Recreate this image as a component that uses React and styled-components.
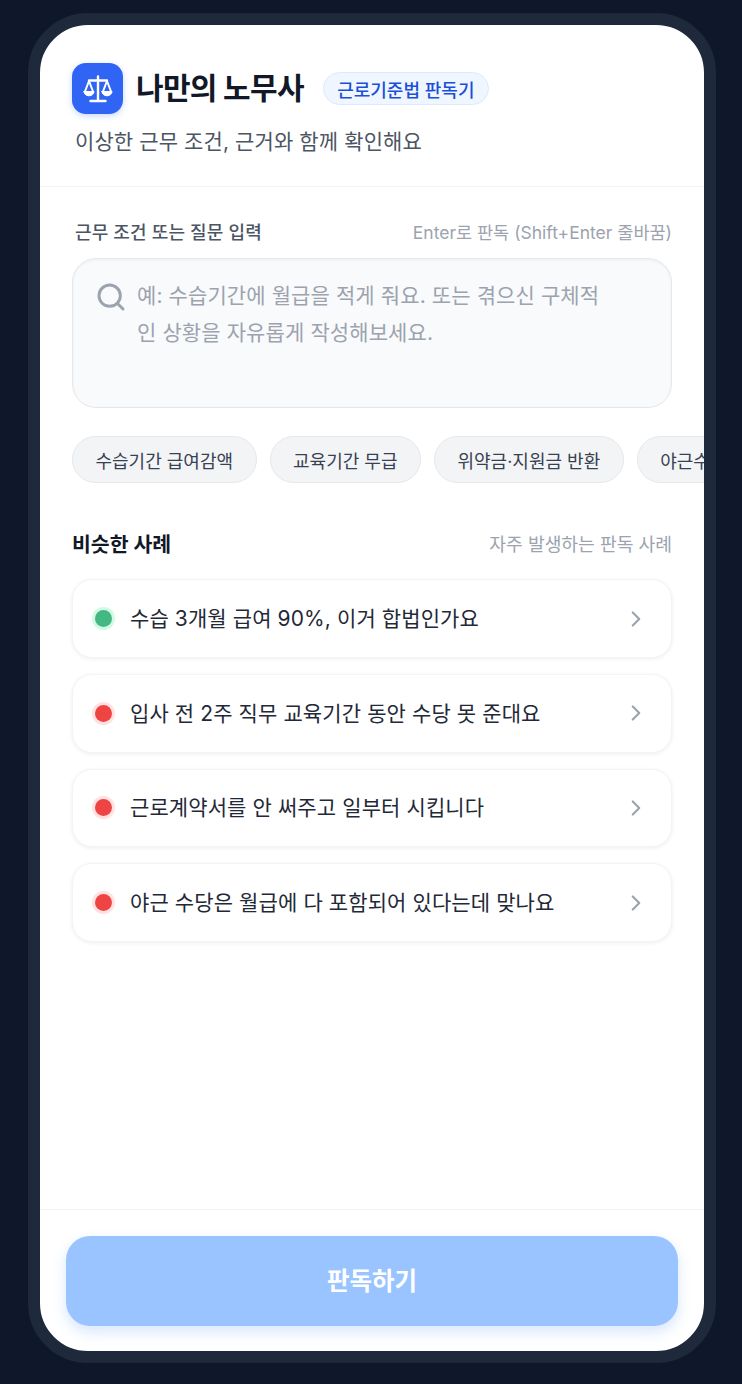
import styled, { createGlobalStyle } from 'styled-components';
import { Search, ChevronRight } from 'lucide-react';

const GlobalStyle = createGlobalStyle`
  html, body {
    margin: 0;
    padding: 0;
    background: #0f172a;
  }
  * {
    box-sizing: border-box;
  }
  body {
    font-family: 'Inter', 'Noto Sans CJK KR', sans-serif;
  }
`;

const Page = styled.div`
  width: 742px;
  height: 1384px;
  padding: 13px 26px 21px 28px;
  background: #0f172a;
  overflow: hidden;
`;

const Phone = styled.div`
  width: 688px;
  height: 1350px;
  border: 12px solid #1e293b;
  border-radius: 60px;
  background: #fff;
  overflow: hidden;
  display: flex;
  flex-direction: column;
`;

const Header = styled.header`
  height: 162px;
  padding: 38px 32px 0;
  border-bottom: 1px solid #f3f4f6;
  flex-shrink: 0;
`;

const Brand = styled.div`
  display: flex;
  align-items: center;
`;

const Logo = styled.div`
  width: 51px;
  height: 51px;
  border-radius: 14px;
  background: #2f64f5;
  color: #fff;
  display: flex;
  align-items: center;
  justify-content: center;
  box-shadow: 0 2px 6px rgba(37, 99, 235, 0.25);
`;

const Title = styled.h1`
  margin: 0 0 0 13px;
  font-size: 30px;
  line-height: 51px;
  font-weight: 700;
  letter-spacing: -0.7px;
  color: #111827;
`;

const Badge = styled.span`
  margin-left: 19px;
  height: 33px;
  width: 166px;
  border-radius: 17px;
  border: 1px solid #dbeafe;
  background: #eff6ff;
  color: #1d4ed8;
  font-size: 18px;
  font-weight: 500;
  display: flex;
  align-items: center;
  justify-content: center;
`;

const Subtitle = styled.p`
  margin: 13px 0 0 3px;
  font-size: 21px;
  line-height: 29px;
  letter-spacing: 0.1px;
  color: #4b5563;
`;

const Main = styled.main`
  flex: 1;
  min-height: 0;
  padding: 31px 0 0;
  overflow: hidden;
`;

const InputHead = styled.div`
  display: flex;
  align-items: center;
  justify-content: space-between;
  padding: 0 32px 0 35px;
  height: 26px;
`;

const Label = styled.span`
  font-size: 18px;
  font-weight: 500;
  letter-spacing: 0.15px;
  color: #4b5563;
`;

const Hint = styled.span`
  font-size: 17.5px;
  color: #9ca3af;
`;

const InputBox = styled.div`
  margin: 14px 32px 0;
  height: 150px;
  border: 1px solid #e5e7eb;
  border-radius: 24px;
  background: #f9fafb;
  box-shadow: inset 0 1px 3px rgba(0, 0, 0, 0.05);
  padding: 18px 22px 0;
  display: flex;
  align-items: flex-start;
  gap: 10px;
  color: #9ca3af;
`;

const SearchIcon = styled(Search)`
  flex-shrink: 0;
  margin-top: 4px;
`;

const Placeholder = styled.div`
  width: 470px;
  font-size: 21px;
  line-height: 37px;
  letter-spacing: 0.1px;
  color: #9ca3af;
`;

const ChipRow = styled.div`
  margin-top: 28px;
  padding-left: 32px;
  display: flex;
  gap: 13px;
  overflow: hidden;
`;

const Chip = styled.span`
  flex-shrink: 0;
  height: 47px;
  padding: 0 22.5px;
  border: 1px solid #e5e7eb;
  border-radius: 24px;
  background: #f3f4f6;
  color: #374151;
  font-size: 18px;
  font-weight: 400;
  display: flex;
  align-items: center;
`;

const SectionHead = styled.div`
  margin-top: 46px;
  padding: 0 32px;
  height: 28px;
  display: flex;
  align-items: center;
  justify-content: space-between;
`;

const SectionTitle = styled.h2`
  margin: 0;
  font-size: 20.5px;
  font-weight: 700;
  color: #111827;
`;

const SectionNote = styled.span`
  font-size: 18.2px;
  color: #9ca3af;
`;

const CaseList = styled.div`
  margin-top: 22.3px;
  padding: 0 32px;
  display: flex;
  flex-direction: column;
  gap: 16px;
`;

const CaseCard = styled.div`
  height: 78.67px;
  padding: 0 22px;
  border: 1px solid #f3f4f6;
  border-radius: 20px;
  background: #fff;
  box-shadow: 0 1px 4px rgba(0, 0, 0, 0.07);
  display: flex;
  align-items: center;
  color: #9ca3af;
`;

const Dot = styled.span`
  width: 17px;
  height: 17px;
  flex-shrink: 0;
  border-radius: 50%;
  background: ${(p) => (p.$tone === 'safe' ? '#43b883' : '#ef4444')};
  box-shadow: 0 0 0 3px ${(p) => (p.$tone === 'safe' ? '#d1fae5' : '#fee2e2')};
`;

const CaseText = styled.span`
  flex: 1;
  margin-left: 18px;
  padding-bottom: 3px;
  font-size: 21px;
  letter-spacing: 0.1px;
  color: #1f2937;
`;

const Footer = styled.footer`
  height: 142px;
  flex-shrink: 0;
  border-top: 1px solid #f3f4f6;
  padding: 26px 26px 0;
`;

const SubmitButton = styled.button`
  width: 100%;
  height: 90px;
  padding: 0 0 4px;
  border: 0;
  border-radius: 24px;
  background: #9ac4ff;
  color: #fff;
  font-family: inherit;
  font-size: 24.5px;
  font-weight: 700;
  box-shadow: 0 6px 14px rgba(59, 130, 246, 0.2);
`;

function ScaleMark() {
  return (
    <svg width="30" height="28" viewBox="0 0 30 28" fill="none" stroke="currentColor" strokeWidth="2.4" strokeLinecap="round" strokeLinejoin="round">
      <path d="M15 1.5V25M7.5 26H22.5M6 5.5H24" />
      <path d="M6 6 1.8 17M6 6l4.2 11M24 6l-4.2 11M24 6l4.2 11" strokeWidth="2" />
      <path d="M1 16.5H11C11 19 8.8 20.8 6 20.8S1 19 1 16.5ZM19 16.5H29C29 19 26.8 20.8 24 20.8S19 19 19 16.5Z" fill="currentColor" strokeWidth="1" />
    </svg>
  );
}

const chips = ['수습기간 급여감액', '교육기간 무급', '위약금·지원금 반환', '야근수당 미지급'];

const cases = [
  { tone: 'safe', text: '수습 3개월 급여 90%, 이거 합법인가요' },
  { tone: 'danger', text: '입사 전 2주 직무 교육기간 동안 수당 못 준대요' },
  { tone: 'danger', text: '근로계약서를 안 써주고 일부터 시킵니다' },
  { tone: 'danger', text: '야근 수당은 월급에 다 포함되어 있다는데 맞나요' },
];

export default function App() {
  return (
    <Page>
      <GlobalStyle />
      <Phone>
        <Header>
          <Brand>
            <Logo>
              <ScaleMark />
            </Logo>
            <Title>나만의 노무사</Title>
            <Badge>근로기준법 판독기</Badge>
          </Brand>
          <Subtitle>이상한 근무 조건, 근거와 함께 확인해요</Subtitle>
        </Header>
        <Main>
          <InputHead>
            <Label>근무 조건 또는 질문 입력</Label>
            <Hint>Enter로 판독 (Shift+Enter 줄바꿈)</Hint>
          </InputHead>
          <InputBox>
            <SearchIcon size={32} strokeWidth={2.2} />
            <Placeholder>예: 수습기간에 월급을 적게 줘요. 또는 겪으신 구체적인 상황을 자유롭게 작성해보세요.</Placeholder>
          </InputBox>
          <ChipRow>
            {chips.map((chip) => (
              <Chip key={chip}>{chip}</Chip>
            ))}
          </ChipRow>
          <SectionHead>
            <SectionTitle>비슷한 사례</SectionTitle>
            <SectionNote>자주 발생하는 판독 사례</SectionNote>
          </SectionHead>
          <CaseList>
            {cases.map((item) => (
              <CaseCard key={item.text}>
                <Dot $tone={item.tone} />
                <CaseText>{item.text}</CaseText>
                <ChevronRight size={26} />
              </CaseCard>
            ))}
          </CaseList>
        </Main>
        <Footer>
          <SubmitButton>판독하기</SubmitButton>
        </Footer>
      </Phone>
    </Page>
  );
}
